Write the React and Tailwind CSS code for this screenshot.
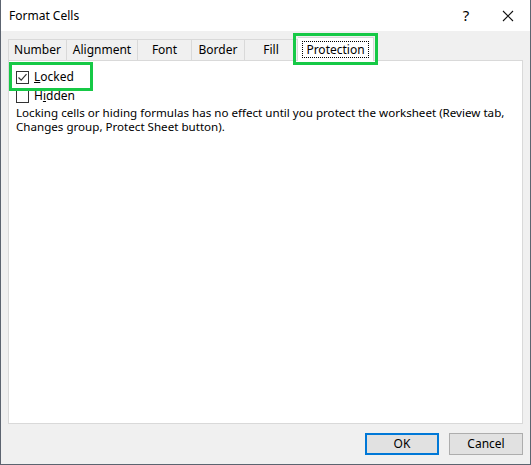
import React from "react";

const font = { fontFamily: '"Noto Sans", "Open Sans", sans-serif' };

function Tab({ label, w }) {
  return (
    <div
      className="h-[20px] flex items-center justify-center border-r border-[#d9d9d9] text-[12px] text-black bg-[#f0f0f0]"
      style={{ width: w }}
    >
      {label}
    </div>
  );
}

function Check({ checked }) {
  return (
    <div className="w-[13px] h-[13px] border border-[#333] bg-white flex items-center justify-center">
      {checked && (
        <svg width="11" height="11" viewBox="0 0 11 11">
          <path d="M1.5 5.5 L4.2 8.2 L9.5 2.2" fill="none" stroke="#333" strokeWidth="1.2" />
        </svg>
      )}
    </div>
  );
}

export default function App() {
  return (
    <div
      className="relative w-[531px] h-[465px] flex flex-col border-l border-r border-b border-[#5c6470] bg-[#f0f0f0] overflow-hidden"
      style={font}
    >
      {/* title bar */}
      <div className="h-[31px] bg-white flex items-center pl-[8px] shrink-0">
        <span className="text-[12px] text-black">Format Cells</span>
        <div className="flex-1" />
        <span className="text-[15px] text-black w-[20px] mr-[26px] text-center">?</span>
        <svg width="12" height="12" viewBox="0 0 12 12" className="mr-[16px]">
          <path d="M1 1 L11 11 M11 1 L1 11" stroke="#111" strokeWidth="1.1" />
        </svg>
      </div>

      {/* body */}
      <div className="flex-1 flex flex-col px-[7px]">
        {/* tabs */}
        <div className="h-[29px] flex items-end">
          <div className="flex items-end">
            <div className="flex border-t border-l border-[#d9d9d9]">
              <Tab label="Number" w={58} />
              <Tab label="Alignment" w={71} />
              <Tab label="Font" w={54} />
              <Tab label="Border" w={53} />
              <Tab label="Fill" w={53} />
            </div>
            <div className="w-[76px] h-[24px] mb-[-1px] bg-white border-t border-r border-[#d9d9d9] flex items-center justify-center relative z-10">
              <span className="text-[12px] text-black px-[3px] border border-dotted border-black leading-[15px]">
                Protection
              </span>
            </div>
          </div>
        </div>

        {/* panel */}
        <div className="w-[515px] h-[364px] bg-white border border-[#d9d9d9] pt-[9px] pl-[7px]">
          <div className="flex items-center gap-[5px] h-[14px]">
            <Check checked />
            <span className="text-[12px] text-black"><span className="underline">L</span>ocked</span>
          </div>
          <div className="flex items-center gap-[5px] h-[14px] mt-[5px]">
            <Check />
            <span className="text-[12px] text-black">H<span className="underline">i</span>dden</span>
          </div>
          <p className="text-[11.6px] leading-[14px] text-black mt-[3px] whitespace-nowrap">
            Locking cells or hiding formulas has no effect until you protect the worksheet (Review tab,
            <br />
            Changes group, Protect Sheet button).
          </p>
        </div>

        {/* buttons */}
        <div className="flex justify-end gap-[10px] mt-[9px]">
          <button className="w-[74px] h-[22px] bg-[#e1e1e1] border-2 border-[#0078d7] text-[12px] text-black">
            OK
          </button>
          <button className="w-[74px] h-[22px] bg-[#e1e1e1] border border-[#adadad] text-[12px] text-black">
            Cancel
          </button>
        </div>
      </div>

      {/* green highlight annotations */}
      <div className="absolute left-[8px] top-[62px] w-[84px] h-[29px] border-[3px] border-[#16c946] pointer-events-none" />
      <div className="absolute left-[292px] top-[33px] w-[85px] h-[32px] border-[3px] border-[#16c946] pointer-events-none z-20" />
    </div>
  );
}
